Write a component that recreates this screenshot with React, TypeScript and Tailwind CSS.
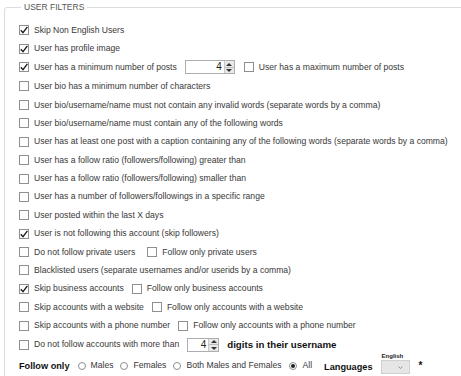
import React from 'react';

const Check: React.FC<{ checked?: boolean }> = ({ checked }) => (
  <span className="w-[10px] h-[10px] shrink-0 border border-[#8e8f8f] bg-white flex items-center justify-center">
    {checked && (
      <svg width="8" height="8" viewBox="0 0 8 8">
        <path d="M0.8 4.2 L3 6.6 L7.4 0.8" fill="none" stroke="#1e1e1e" strokeWidth="1.4" />
      </svg>
    )}
  </span>
);

const Radio: React.FC<{ checked?: boolean }> = ({ checked }) => (
  <span className="w-[8px] h-[8px] shrink-0 rounded-full border border-[#8e8f8f] bg-white flex items-center justify-center">
    {checked && <span className="w-[4px] h-[4px] rounded-full bg-[#222]" />}
  </span>
);

const Spinner: React.FC<{ value: number; width: string }> = ({ value, width }) => (
  <span className={`${width} h-[14px] border border-[#abadb3] bg-white flex items-stretch shrink-0`}>
    <span className="flex-1 text-right pr-[2px] leading-[12px] text-[10px] text-[#222]">{value}</span>
    <span className="w-[10px] flex flex-col border-l border-[#c8c8c8] bg-[#e8e8e8]">
      <span className="flex-1 flex items-center justify-center border-b border-[#bdbdbd]">
        <svg width="6" height="3" viewBox="0 0 6 3"><path d="M0 3 L3 0 L6 3 Z" fill="#333" /></svg>
      </span>
      <span className="flex-1 flex items-center justify-center">
        <svg width="6" height="3" viewBox="0 0 6 3"><path d="M0 0 L3 3 L6 0 Z" fill="#333" /></svg>
      </span>
    </span>
  </span>
);

const Row: React.FC<{ children: React.ReactNode; h?: string }> = ({ children, h = 'h-[18.4px]' }) => (
  <div className={`${h} flex items-center`}>{children}</div>
);

const Label: React.FC<{ children: React.ReactNode }> = ({ children }) => (
  <span className="ml-[5px] whitespace-nowrap">{children}</span>
);

const singles: [string, boolean][] = [
  ['User bio/username/name must not contain any invalid words (separate words by a comma)', false],
  ['User bio/username/name must contain any of the following words', false],
  ['User has at least one post with a caption containing any of the following words (separate words by a comma)', false],
  ['User has a follow ratio (followers/following) greater than', false],
  ['User has a follow ratio (followers/following) smaller than', false],
  ['User has a number of followers/followings in a specific range', false],
  ['User posted within the last X days', false],
  ['User is not following this account (skip followers)', true],
];

const App: React.FC = () => {
  return (
    <div className="w-[461px] h-[376px] overflow-hidden bg-white text-[#383838] text-[8.6px] font-['Liberation_Sans',Arial,sans-serif]">
      <fieldset className="ml-[4px] mt-[2px] w-[480px] h-[420px] border border-[#dcdcdc] rounded-[3px] pl-[14px] pt-[9px]">
        <legend className="ml-[2px] px-[3px] text-[#555] text-[8.5px] leading-[10px]">USER FILTERS</legend>

        <Row><Check checked /><Label>Skip Non English Users</Label></Row>
        <Row><Check checked /><Label>User has profile image</Label></Row>
        <Row h="h-[19px]">
          <Check checked /><Label>User has a minimum number of posts</Label>
          <span className="ml-[8px]"><Spinner value={4} width="w-[50px]" /></span>
          <span className="ml-[9px]"><Check /></span>
          <Label>User has a maximum number of posts</Label>
        </Row>
        <Row h="h-[19px]"><Check /><Label>User bio has a minimum number of characters</Label></Row>
        {singles.map(([t, c]) => (
          <Row key={t}><Check checked={c} /><Label>{t}</Label></Row>
        ))}
        <Row>
          <Check /><Label>Do not follow private users</Label>
          <span className="ml-[12px]"><Check /></span>
          <Label>Follow only private users</Label>
        </Row>
        <Row><Check /><Label>Blacklisted users (separate usernames and/or userids by a comma)</Label></Row>
        <Row>
          <Check checked /><Label>Skip business accounts</Label>
          <span className="ml-[8px]"><Check /></span>
          <Label>Follow only business accounts</Label>
        </Row>
        <Row>
          <Check /><Label>Skip accounts with a website</Label>
          <span className="ml-[8px]"><Check /></span>
          <Label>Follow only accounts with a website</Label>
        </Row>
        <Row>
          <Check /><Label>Skip accounts with a phone number</Label>
          <span className="ml-[8px]"><Check /></span>
          <Label>Follow only accounts with a phone number</Label>
        </Row>
        <Row h="h-[20px]">
          <Check /><Label>Do not follow accounts with more than</Label>
          <span className="ml-[8px]"><Spinner value={4} width="w-[32px]" /></span>
          <span className="ml-[8px] font-bold text-[9.7px] text-[#111]">digits in their username</span>
        </Row>
        <div className="h-[22px] flex items-center">
          <span className="font-bold text-[9.2px] text-[#111] mr-[8px] mt-[2px]">Follow only</span>
          <Radio /><span className="ml-[5px] mr-[7px]">Males</span>
          <Radio /><span className="ml-[5px] mr-[7px]">Females</span>
          <Radio /><span className="ml-[5px] mr-[8px]">Both Males and Females</span>
          <Radio checked /><span className="ml-[5px] mr-[12px]">All</span>
          <span className="font-bold text-[9.2px] text-[#111] mt-[5px]">Languages</span>
          <div className="ml-[8px] flex flex-col mt-[-4px]">
            <span className="text-[6px] font-bold leading-[7px] text-[#222] ml-[1px]">English</span>
            <span className="w-[29px] h-[14px] border border-[#d0d0d0] bg-[#e6e6e6] flex items-center justify-end pr-[6px]">
              <svg width="5" height="3" viewBox="0 0 5 3"><path d="M0.5 0.5 L2.5 2.5 L4.5 0.5" fill="none" stroke="#888" strokeWidth="0.9" /></svg>
            </span>
          </div>
          <span className="ml-[9px] font-bold text-[10px] text-[#111]">*</span>
        </div>
      </fieldset>
    </div>
  );
};

export default App;
